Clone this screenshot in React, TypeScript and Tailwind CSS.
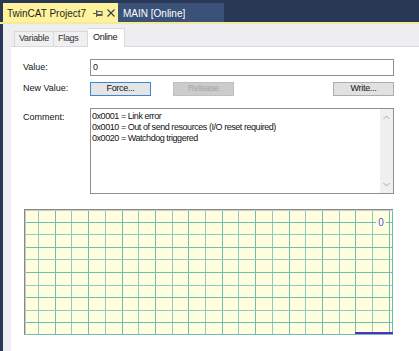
import React from 'react'

const font = { fontFamily: '"Liberation Sans", Arial, sans-serif' }

function PinIcon() {
  return (
    <svg width="10" height="7" viewBox="0 0 10 7" className="shrink-0 block">
      <line x1="0" y1="3.5" x2="3" y2="3.5" stroke="#5a5a5a" strokeWidth="1" />
      <line x1="3.5" y1="0" x2="3.5" y2="7" stroke="#5a5a5a" strokeWidth="1" />
      <rect x="4" y="1.5" width="5" height="4" fill="none" stroke="#5a5a5a" strokeWidth="1" />
      <line x1="4" y1="4.5" x2="9" y2="4.5" stroke="#5a5a5a" strokeWidth="1" />
    </svg>
  )
}

function CloseIcon() {
  return (
    <svg width="8" height="8" viewBox="0 0 8 8" className="shrink-0 block">
      <path d="M0.5 0.5 L7.5 7.5 M7.5 0.5 L0.5 7.5" stroke="#3a3a3a" strokeWidth="1.1" />
    </svg>
  )
}

function Chevron({ up }: { up?: boolean }) {
  return (
    <svg width="7" height="5" viewBox="0 0 7 5">
      <path d={up ? 'M0.5 4 L3.5 1 L6.5 4' : 'M0.5 1 L3.5 4 L6.5 1'} fill="none" stroke="#a6a6a6" strokeWidth="1" />
    </svg>
  )
}

function Chart() {
  const w = 369
  const h = 126
  const cols: number[] = []
  for (let k = 0; k <= 21; k++) cols.push(14 + k * 16.7)
  const rows: number[] = []
  for (let k = 1; k < 10; k++) rows.push(k * 12.6)
  return (
    <svg width={w} height={h} viewBox={`0 0 ${w} ${h}`} className="block">
      <rect x="0" y="0" width={w} height={h} fill="#ffffdf" />
      {cols.map((x, i) => (
        <line key={'c' + i} x1={Math.round(x) + 0.5} y1="0" x2={Math.round(x) + 0.5} y2={h} stroke={i % 2 ? '#6dbdb1' : '#8fcbbf'} strokeWidth="1" />
      ))}
      {rows.map((y, i) => (
        <line key={'r' + i} x1="0" y1={Math.round(y) + 0.5} x2={w} y2={Math.round(y) + 0.5} stroke={i % 2 ? '#8fcbbf' : '#6dbdb1'} strokeWidth="1" />
      ))}
      <line x1={w - 0.5} y1="0" x2={w - 0.5} y2={h} stroke="#6dbdb1" />
      <line x1="0" y1={h - 0.5} x2={w} y2={h - 0.5} stroke="#6dbdb1" />
      <rect x="352" y="6" width="10" height="15" fill="#ffffdf" />
      <text x="357" y="17" fontSize="10" fill="#5b4fd0" textAnchor="middle" style={font}>
        0
      </text>
      <rect x="331" y={h - 3} width={w - 331} height="2" fill="#4f30c0" />
      <line x1="0.5" y1="0" x2="0.5" y2={h} stroke="#8a8a8a" />
      <line x1="0" y1="0.5" x2={w} y2="0.5" stroke="#8a8a8a" />
      <line x1="1.5" y1="1" x2="1.5" y2={h} stroke="#c8c8c8" />
      <line x1="1" y1="1.5" x2={w} y2="1.5" stroke="#c8c8c8" />
    </svg>
  )
}

export default function App() {
  return (
    <div className="w-[419px] h-[351px] bg-[#293955] flex flex-col overflow-hidden text-[9px] tracking-[-0.3px] text-[#141414]" style={font}>
      {/* document tabs */}
      <div className="flex h-[22px] pt-[3px] pl-[3px] shrink-0 whitespace-nowrap">
        <div className="w-[115px] bg-[#fff29d] flex items-center pl-[4px] pr-[3px] pt-[1px] text-[10px] tracking-normal text-[#1e1e1e]">
          <span>TwinCAT Project7</span>
          <span className="ml-auto"><PinIcon /></span>
          <span className="ml-[4px]"><CloseIcon /></span>
        </div>
        <div className="w-[106px] bg-[#3b5278] flex items-center pl-[5px] pt-[1px] text-[10px] tracking-normal text-white">
          MAIN [Online]
        </div>
      </div>
      <div className="h-[2px] bg-[#f4ea9e] shrink-0" />

      <div className="flex-1 flex pl-[3px]">
        <div className="flex-1 flex flex-col bg-[#eeeef0] pl-[8px]">
          {/* property tabs */}
          <div className="h-[23px] flex items-end pl-[3px] shrink-0 border-b border-[#dadada] whitespace-nowrap">
            <div className="h-[15px] w-[40px] pl-[4px] flex items-center bg-[#f0f0f0] border border-b-0 border-[#d9d9d9] text-[#333]">Variable</div>
            <div className="h-[15px] w-[34px] pl-[4px] flex items-center bg-[#f0f0f0] border border-l-0 border-b-0 border-[#d9d9d9] text-[#333]">Flags</div>
            <div className="h-[19px] w-[37px] pl-[5px] flex items-center bg-white border border-l-0 border-b-0 border-[#d9d9d9] -mb-px">Online</div>
          </div>

          {/* content */}
          <div className="flex-1 bg-white pl-[12px] pr-[25px] pt-[12px]">
            <div className="grid grid-cols-[67px_1fr] gap-y-[6px]">
              <div className="flex items-center tracking-normal">Value:</div>
              <div className="h-[17px] border border-[#8f8f8f] flex items-center pl-[2px]">0</div>

              <div className="flex items-center tracking-normal">New Value:</div>
              <div className="flex">
                <div className="w-[61px] h-[14px] bg-[#e5e5e5] border border-[#3c84d6] flex items-center justify-center">Force...</div>
                <div className="w-[61px] h-[14px] ml-[22px] bg-[#cccccc] border border-[#bfbfbf] flex items-center justify-center text-[#a3a3a3]">Release</div>
                <div className="w-[61px] h-[14px] ml-auto bg-[#e1e1e1] border border-[#adadad] flex items-center justify-center">Write...</div>
              </div>

              <div className="pt-[3px] mt-[6px] tracking-normal">Comment:</div>
              <div className="h-[86px] mt-[6px] border border-[#8f8f8f] flex">
                <div className="flex-1 pl-[1px] pt-[2px] leading-[11px] tracking-[-0.45px]">
                  <div>0x0001 = Link error</div>
                  <div>0x0010 = Out of send resources (I/O reset required)</div>
                  <div>0x0020 = Watchdog triggered</div>
                </div>
                <div className="w-[13px] bg-[#f0f0f0] flex flex-col items-center justify-between py-[6px]">
                  <Chevron up />
                  <Chevron />
                </div>
              </div>
            </div>

            <div className="mt-[15px] ml-[1px]">
              <Chart />
            </div>
          </div>
        </div>
      </div>
    </div>
  )
}
